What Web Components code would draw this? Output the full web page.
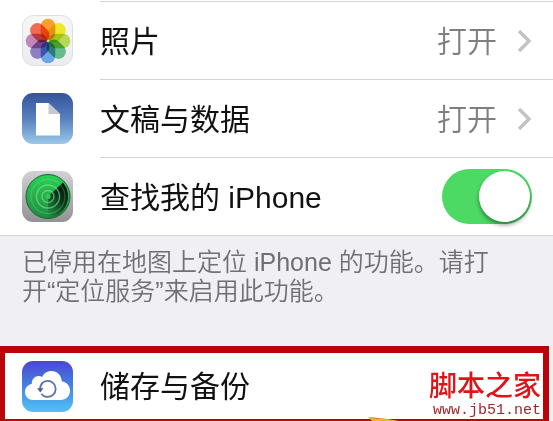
<!DOCTYPE html>
<html lang="zh-CN">
  <head>
    <meta charset="UTF-8" />
    <meta name="viewport" content="width=device-width, initial-scale=1.0" />
    <title>iCloud</title>
    <style>
      body {
        margin: 0;
        background: #efeff4;
        color: #111;
        font-family: "Liberation Sans", "Noto Sans CJK SC", sans-serif;
      }
    </style>
  </head>
  <body>
    <settings-page></settings-page>

    <script>
      const icons = {
        photos: `
          <defs>
            <linearGradient id="bg" x2="0" y2="1">
              <stop stop-color="#f7f7f8" /><stop offset="1" stop-color="#ececf0" />
            </linearGradient>
          </defs>
          <rect x="0.5" y="0.5" width="50" height="50" rx="11" fill="url(#bg)" stroke="#dedee2" />
          <g class="petals"></g>`,
        documents: `
          <defs>
            <linearGradient id="bg" x2="0" y2="1">
              <stop stop-color="#34539a" /><stop offset="0.5" stop-color="#587fbe" />
              <stop offset="1" stop-color="#9bc8e8" />
            </linearGradient>
          </defs>
          <rect width="51" height="51" rx="11" fill="url(#bg)" />
          <path d="M14 10h12.500L38 21v21.500H14z" fill="#fff" />
          <path d="M26.500 10L38 21H26.500z" fill="#c6c9ce" />`,
        find: `
          <defs>
            <linearGradient id="bg" x2="0" y2="1">
              <stop stop-color="#d2d2d5" /><stop offset="1" stop-color="#929296" />
            </linearGradient>
            <linearGradient id="radar" x2="0" y2="1">
              <stop stop-color="#25d354" /><stop offset="0.5" stop-color="#27ac4b" />
              <stop offset="1" stop-color="#1f8c41" />
            </linearGradient>
            <linearGradient id="sweep" x1="0.7" y1="0" x2="0.1" y2="1">
              <stop stop-color="#00120a" /><stop offset="0.4" stop-color="#00120a" stop-opacity="0.75" />
              <stop offset="1" stop-color="#00120a" stop-opacity="0" />
            </linearGradient>
          </defs>
          <rect width="51" height="51" rx="11" fill="url(#bg)" />
          <circle cx="26" cy="25.500" r="22" fill="url(#radar)" />
          <path d="M26 25.500L41 11.500A22 22 0 0 1 26 47.500z" fill="url(#sweep)" />
          <g fill="none" stroke="#8ae29b" stroke-opacity="0.6" stroke-width="1.400">
            <circle cx="26" cy="25.500" r="6" />
            <circle cx="26" cy="25.500" r="11.500" />
            <circle cx="26" cy="25.500" r="17" stroke-opacity="0.250" />
          </g>
          <circle cx="26" cy="25.500" r="22" fill="none" stroke="#14652c" />
          <circle cx="26" cy="25.500" r="2.500" fill="#35c95d" />`,
        storage: `
          <defs>
            <linearGradient id="bg" x2="0" y2="1">
              <stop stop-color="#4c46d2" /><stop offset="0.5" stop-color="#4385e2" />
              <stop offset="1" stop-color="#53c2f3" />
            </linearGradient>
          </defs>
          <rect width="51" height="51" rx="11" fill="url(#bg)" />
          <path d="M11.500 39C6.500 39 3 35.500 3 31C3 26.700 6 23.600 9.800 23C9.700 18.200 13 15 16.500 15C17.900 15 19 15.400 20.100 16C22 12.300 25 10 29.300 10C35.500 10 39.500 14.600 39.800 20.200C44.800 21 48 24.800 48 29.500C48 35 44.200 39 38.500 39z" fill="#fff" />
          <path d="M19.500 22.800A8 8 0 1 1 19.300 32.700" fill="none" stroke="#5873a4" stroke-width="1.800" />
          <path d="M18.200 28.200C18 25.500 18.800 23.500 20.500 21.800" fill="none" stroke="#5873a4" stroke-width="1.800" />
          <path d="M15 27.300h6.500l-3.200 4.200z" fill="#49658f" />`,
      };

      // Clockwise from the top petal
      const petalColors = [
        "#fba02c", "#ede72e", "#b5d956", "#65bd8b",
        "#69a7e4", "#8f80c4", "#c386b8", "#f06a55",
      ];

      class SettingsIcon extends HTMLElement {
        connectedCallback() {
          this.attachShadow({ mode: "open" }).innerHTML = `
            <style>
              :host {
                flex: none;
                display: block;
                width: 51px;
                height: 51px;
              }
              svg {
                display: block;
                width: 100%;
                height: 100%;
              }
              .petals {
                isolation: isolate;
              }
              .petals rect {
                mix-blend-mode: multiply;
              }
            </style>
            <svg viewBox="0 0 51 51" aria-hidden="true">${icons[this.getAttribute("name")]}</svg>
          `;
          const petals = this.shadowRoot.querySelector(".petals");
          if (petals) {
            petals.innerHTML = petalColors
              .map(
                (color, i) =>
                  `<rect x="18.700" y="3.700" width="14.600" height="21.500" rx="7.300" fill="${color}" transform="rotate(${i * 45} 26 26)" />`
              )
              .join("");
          }
        }
      }
      customElements.define("settings-icon", SettingsIcon);

      const rowStyles = `
        :host {
          display: block;
        }
        .row {
          display: flex;
          align-items: stretch;
          gap: 27px;
          height: var(--row-height, 78px);
          padding-left: var(--row-inset, 22px);
          color: inherit;
          text-decoration: none;
        }
        settings-icon {
          align-self: center;
        }
        .content {
          flex: 1;
          display: flex;
          align-items: center;
          padding-right: 21px;
          border-top: var(--row-line, 1px solid #d3d3d6);
          font-size: 30px;
          line-height: 40px;
        }
        .title,
        .value {
          padding-top: 2px;
        }
        .title {
          flex: 1;
        }
      `;

      class SettingsLink extends HTMLElement {
        connectedCallback() {
          this.attachShadow({ mode: "open" }).innerHTML = `
            <style>
              ${rowStyles}
              .value {
                color: #7f7f83;
                font-weight: 350;
              }
              .chevron {
                width: 15px;
                height: 24px;
                margin-left: 20px;
              }
            </style>
            <a class="row" href="#${this.getAttribute("icon")}">
              <settings-icon name="${this.getAttribute("icon")}"></settings-icon>
              <span class="content">
                <span class="title"><slot></slot></span>
                <span class="value"><slot name="value"></slot></span>
                ${
                  this.hasAttribute("plain")
                    ? ""
                    : `<svg class="chevron" viewBox="0 0 15 24" aria-hidden="true">
                        <path d="M2 2l10 10L2 22" fill="none" stroke="#c2c2c7" stroke-width="3.500" />
                      </svg>`
                }
              </span>
            </a>
          `;
        }
      }
      customElements.define("settings-link", SettingsLink);

      class SettingsSwitch extends HTMLElement {
        connectedCallback() {
          this.attachShadow({ mode: "open" }).innerHTML = `
            <style>
              ${rowStyles}
              input {
                appearance: none;
                display: flex;
                width: 90px;
                height: 55px;
                margin: 0;
                padding: 2px;
                box-sizing: border-box;
                border-radius: 28px;
                background: #e5e5ea;
              }
              input::before {
                content: "";
                width: 51px;
                height: 51px;
                border-radius: 50%;
                background: #fff;
                box-shadow: 0 3px 4px rgba(0, 0, 0, 0.4);
              }
              input:checked {
                justify-content: flex-end;
                background: #4cd964;
              }
            </style>
            <label class="row">
              <settings-icon name="${this.getAttribute("icon")}"></settings-icon>
              <span class="content">
                <span class="title"><slot></slot></span>
                <input type="checkbox" role="switch" checked />
              </span>
            </label>
          `;
        }
      }
      customElements.define("settings-switch", SettingsSwitch);

      class SettingsGroup extends HTMLElement {
        connectedCallback() {
          this.attachShadow({ mode: "open" }).innerHTML = `
            <style>
              :host {
                display: block;
              }
              .rows {
                padding-top: 1px;
                border-bottom: 1px solid #d3d3d6;
                background: #fff;
              }
              .note {
                padding: 12px 54px 40px 22px;
                color: #6f6f74;
                font-size: 25px;
                font-weight: 350;
                line-height: 29px;
              }
            </style>
            <div class="rows"><slot></slot></div>
            <div class="note"><slot name="note"></slot></div>
          `;
        }
      }
      customElements.define("settings-group", SettingsGroup);

      class HighlightBox extends HTMLElement {
        connectedCallback() {
          this.attachShadow({ mode: "open" }).innerHTML = `
            <style>
              :host {
                --row-height: 66px;
                --row-inset: 17px;
                --row-line: none;
                position: relative;
                display: block;
                margin-right: 4px;
                border: solid #b90408;
                border-width: 7px 6px 2px 5px;
                background: #fff;
              }
              .pointer {
                position: absolute;
                right: 144px;
                bottom: -2px;
                width: 32px;
                height: 4px;
              }
            </style>
            <slot></slot>
            <svg class="pointer" viewBox="0 0 32 4" aria-hidden="true">
              <path d="M1 0L20 2L32 4H5z" fill="#f3b52a" />
              <path d="M1 0L20 2L9 2z" fill="#d98030" />
            </svg>
          `;
        }
      }
      customElements.define("highlight-box", HighlightBox);

      class SiteMark extends HTMLElement {
        connectedCallback() {
          this.attachShadow({ mode: "open" }).innerHTML = `
            <style>
              :host {
                position: absolute;
                right: 2px;
                bottom: 0;
                display: grid;
                justify-items: end;
                color: #e01318;
              }
              .name {
                font-size: 28px;
                font-weight: 500;
                line-height: 32px;
              }
              .url {
                color: #a3262a;
                font-family: "Liberation Mono", monospace;
                font-size: 15px;
                line-height: 16px;
              }
            </style>
            <span class="name">脚本之家</span>
            <span class="url">www.jb51.net</span>
          `;
        }
      }
      customElements.define("site-mark", SiteMark);

      class SettingsPage extends HTMLElement {
        connectedCallback() {
          this.attachShadow({ mode: "open" }).innerHTML = `
            <style>
              :host {
                display: block;
              }
            </style>
            <settings-group>
              <settings-link icon="photos">照片<span slot="value">打开</span></settings-link>
              <settings-link icon="documents">文稿与数据<span slot="value">打开</span></settings-link>
              <settings-switch icon="find">查找我的 iPhone</settings-switch>
              <span slot="note">已停用在地图上定位 iPhone 的功能。请打开“定位服务”来启用此功能。</span>
            </settings-group>
            <highlight-box>
              <settings-link icon="storage" plain>储存与备份</settings-link>
              <site-mark></site-mark>
            </highlight-box>
          `;
        }
      }
      customElements.define("settings-page", SettingsPage);
    </script>
  </body>
</html>
